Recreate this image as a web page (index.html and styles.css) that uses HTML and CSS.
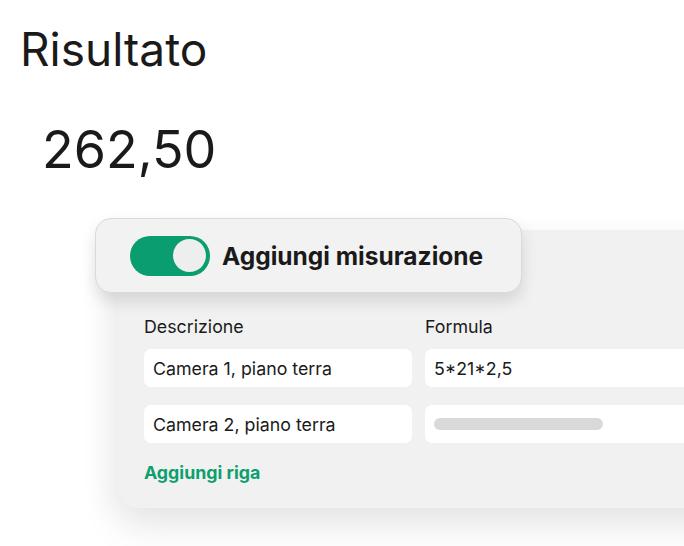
FILE: index.html
```html
<!DOCTYPE html>
<html lang="it">
<head>
    <meta charset="UTF-8">
    <meta name="viewport" content="width=device-width, initial-scale=1.0">
    <title>Risultato</title>
    <link rel="stylesheet" href="styles.css">
</head>
<body>

    <h1 class="title">Risultato</h1>
    <div class="value">262,50</div>

    <div class="card">
        <div class="toggle-pill">
            <span class="switch"><span class="knob"></span></span>
            <span class="toggle-label">Aggiungi misurazione</span>
        </div>

        <div class="grid">
            <div class="label">Descrizione</div>
            <div class="label">Formula</div>

            <div class="field">Camera 1, piano terra</div>
            <div class="field">5*21*2,5</div>

            <div class="field">Camera 2, piano terra</div>
            <div class="field"><span class="placeholder"></span></div>
        </div>

        <a class="add-row" href="#">Aggiungi riga</a>
    </div>

</body>
</html>
```

FILE: styles.css
```css
body {
    font-family: Inter, "Noto Sans", sans-serif;
    margin: 0;
    background-color: #fff;
    color: #1a1a1a;
    overflow: hidden;
    height: 546px;
}
.title {
    font-size: 46px;
    font-weight: 400;
    line-height: 58px;
    margin: 0;
    padding: 20px 0 0 20px;
}
.value {
    font-size: 52px;
    line-height: 62px;
    padding: 41px 0 0 42px;
}
.card {
    position: relative;
    margin: 49px 0 0 118px;
    width: 640px;
    background-color: #f1f1f1;
    border-radius: 20px;
    box-shadow: 0 20px 40px rgba(0, 0, 0, 0.08), -10px 10px 30px rgba(0, 0, 0, 0.04);
    padding: 87px 0 25px 26px;
}
.toggle-pill {
    position: absolute;
    top: -12px;
    left: -23px;
    width: 427px;
    height: 75px;
    display: flex;
    align-items: center;
    gap: 12px;
    padding-left: 34px;
    box-sizing: border-box;
    background-color: #f2f2f2;
    border: 1px solid #dadada;
    border-radius: 16px;
    box-shadow: 0 8px 16px rgba(0, 0, 0, 0.12);
}
.switch {
    width: 80px;
    height: 40px;
    border-radius: 20px;
    background-color: #0a9d6f;
    display: flex;
    align-items: center;
    justify-content: flex-end;
    padding-right: 4px;
    box-sizing: border-box;
}
.knob {
    width: 33px;
    height: 33px;
    border-radius: 50%;
    background-color: #eeeeee;
}
.toggle-label {
    font-size: 24.5px;
    font-weight: 700;
    color: #1a1a1a;
}
.grid {
    display: grid;
    grid-template-columns: 268px 1fr;
    column-gap: 13px;
    row-gap: 18px;
}
.label {
    font-size: 17.8px;
    line-height: 20px;
    margin-bottom: -6px;
}
.field {
    height: 38px;
    background-color: #fff;
    border-radius: 7px;
    display: flex;
    align-items: center;
    padding: 0 9px;
    font-size: 17.8px;
}
.placeholder {
    width: 169px;
    height: 12px;
    border-radius: 6px;
    background-color: #d9d9d9;
}
.add-row {
    display: block;
    margin-top: 20px;
    font-size: 17.8px;
    line-height: 20px;
    font-weight: 700;
    color: #0e9f6e;
    text-decoration: none;
}
```
